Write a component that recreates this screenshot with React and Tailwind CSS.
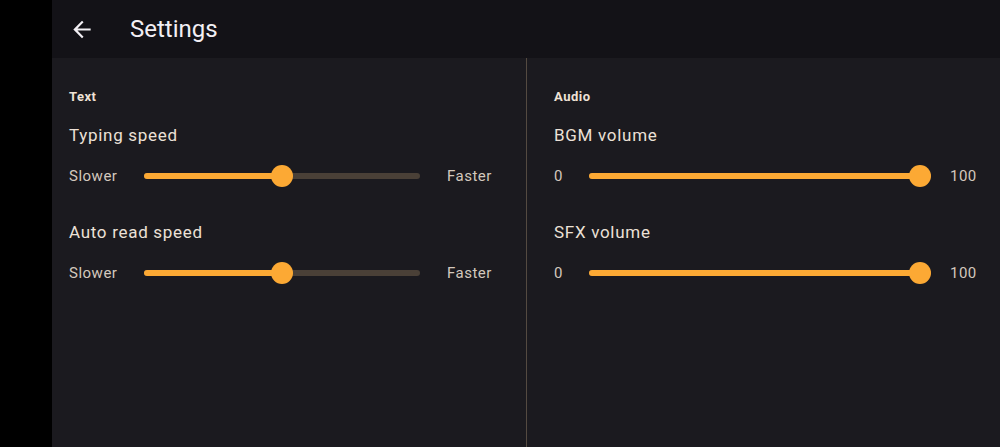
function Slider({ value, width }) {
  const pct = value / 100;
  return (
    <div className="relative h-[22px]" style={{ width }}>
      <div className="absolute left-0 right-0 top-[8px] h-[6px] rounded-full bg-[#4a4037]" />
      <div
        className="absolute left-0 top-[8px] h-[6px] rounded-full bg-[#fca934]"
        style={{ width: `calc(11px + (100% - 22px) * ${pct})` }}
      />
      <div
        className="absolute top-0 h-[22px] w-[22px] rounded-full bg-[#fca934]"
        style={{ left: `calc((100% - 22px) * ${pct})` }}
      />
    </div>
  );
}

function SliderRow({ min, max, value, labelWidth, sliderWidth, gapRight }) {
  return (
    <div className="flex items-center">
      <span className="text-[15px] leading-5 tracking-[0.5px] text-[#d3c8bd]" style={{ width: labelWidth }}>{min}</span>
      <Slider value={value} width={sliderWidth} />
      <span className="text-[15px] leading-5 tracking-[0.5px] text-[#d3c8bd]" style={{ marginLeft: gapRight }}>{max}</span>
    </div>
  );
}

function Section({ title, items, className }) {
  return (
    <div className={className}>
      <h3 className="mt-[31px] text-[13px] font-bold leading-4 tracking-[0.5px] text-[#efe2d6]">{title}</h3>
      {items.map((item, i) => (
        <div key={item.label} className={i === 0 ? 'mt-[18px]' : 'mt-[33px]'}>
          <div className="text-[17px] leading-6 tracking-[0.7px] text-[#ece1d7]">{item.label}</div>
          <div className="mt-[18px]">
            <SliderRow {...item.row} />
          </div>
        </div>
      ))}
    </div>
  );
}

export default function App() {
  const textItems = [
    { label: 'Typing speed', row: { min: 'Slower', max: 'Faster', value: 50, labelWidth: 75, sliderWidth: 276, gapRight: 27 } },
    { label: 'Auto read speed', row: { min: 'Slower', max: 'Faster', value: 50, labelWidth: 75, sliderWidth: 276, gapRight: 27 } },
  ];
  const audioItems = [
    { label: 'BGM volume', row: { min: '0', max: '100', value: 100, labelWidth: 35, sliderWidth: 342, gapRight: 19 } },
    { label: 'SFX volume', row: { min: '0', max: '100', value: 100, labelWidth: 35, sliderWidth: 342, gapRight: 19 } },
  ];

  return (
    <div className="flex h-[447px] w-[1000px] overflow-hidden bg-black font-['Roboto',sans-serif]">
      <div className="w-[52px] shrink-0 bg-black" />
      <div className="flex flex-1 flex-col bg-[#1b1a1f]">
        <div className="flex h-[58px] shrink-0 items-center bg-[#131217]">
          <button className="ml-[17px] flex h-[26px] w-[26px] items-center justify-center text-[#f2eff4]">
            <svg viewBox="0 0 24 24" width="27" height="27" fill="currentColor">
              <path d="M20 11H7.83l5.59-5.59L12 4l-8 8 8 8 1.41-1.41L7.83 13H20v-2z" />
            </svg>
          </button>
          <h1 className="ml-[35px] text-[24px] leading-8 text-[#f2eff4]">Settings</h1>
        </div>
        <div className="flex flex-1">
          <Section title="Text" items={textItems} className="w-[474px] shrink-0 pl-[17px]" />
          <div className="w-px shrink-0 bg-[#544a41]" />
          <Section title="Audio" items={audioItems} className="flex-1 pl-[27px]" />
        </div>
      </div>
    </div>
  );
}
